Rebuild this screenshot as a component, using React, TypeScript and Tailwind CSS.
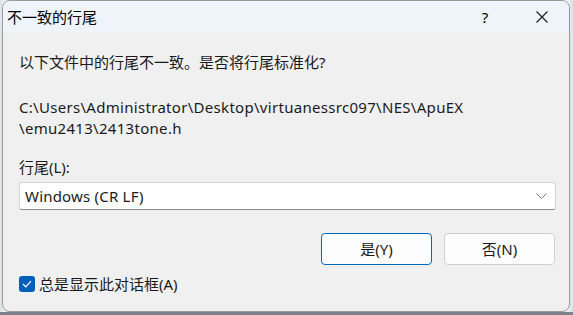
import React from "react";

const cjk = { fontFamily: '"Noto Sans", "Noto Sans CJK SC", sans-serif' };

export default function App() {
  return (
    <div className="w-[573px] h-[315px] overflow-hidden bg-[#e9edf1] flex flex-col" style={cjk}>
      <div className="flex h-[312px]">
        <div className="w-[2px] bg-[#dfe6ea]" />
        <div className="w-[568px] h-[312px] flex flex-col bg-[#f0f0f0] border border-[#9a9a9a] rounded-[8px] overflow-hidden text-[#1a1a1a]">
          {/* title bar */}
          <div className="h-[32px] bg-[#eef4fa] flex items-center shrink-0">
            <span className="pl-[4px] text-[15px] leading-none text-black">不一致的行尾</span>
            <div className="flex-1" />
            <div className="w-[46px] h-[32px] flex items-center justify-center text-[15px] text-black mr-[11px]">?</div>
            <div className="w-[46px] h-[32px] flex items-center justify-center mr-[4px]">
              <svg width="12" height="12" viewBox="0 0 12 12">
                <path d="M0.5 0.5 L11.5 11.5 M11.5 0.5 L0.5 11.5" stroke="#1a1a1a" strokeWidth="1.1" fill="none" />
              </svg>
            </div>
          </div>
          {/* body */}
          <div className="flex flex-col pl-[16px] pr-[14px]">
            <div className="mt-[19px] text-[15px] leading-[20px]">以下文件中的行尾不一致。是否将行尾标准化?</div>
            <div className="mt-[25px] text-[15px] leading-[21px] tracking-[0.3px]">
              <div>C:\Users\Administrator\Desktop\virtuanessrc097\NES\ApuEX</div>
              <div>\emu2413\2413tone.h</div>
            </div>
            <div className="mt-[18px] text-[15px] leading-[20px]">行尾(L):</div>
            <div className="mt-[5px] h-[28px] w-[537px] bg-white border border-[#d4d4d4] border-b-[#8a8a8a] rounded-[3px] flex items-center pl-[5px] pr-[8px] text-[15px]">
              <span className="flex-1 tracking-[0.2px]">Windows (CR LF)</span>
              <svg width="11" height="6" viewBox="0 0 11 6">
                <path d="M0.5 0.5 L5.5 5.5 L10.5 0.5" stroke="#7a7a7a" strokeWidth="1" fill="none" />
              </svg>
            </div>
            <div className="mt-[23px] flex justify-end gap-[12px] pr-[0px]">
              <div className="w-[111px] h-[32px] rounded-[4px] border border-[#0067c0] bg-[#fdfdfd] flex items-center justify-center text-[15px]">是(Y)</div>
              <div className="w-[111px] h-[32px] rounded-[4px] border border-[#d0d0d0] bg-[#fdfdfd] flex items-center justify-center text-[15px]">否(N)</div>
            </div>
            <div className="mt-[9px] flex items-center">
              <div className="w-[16px] h-[16px] rounded-[3px] bg-[#005fb8] flex items-center justify-center">
                <svg width="10" height="8" viewBox="0 0 10 8">
                  <path d="M1 4 L3.8 6.8 L9 1.2" stroke="white" strokeWidth="1.2" fill="none" />
                </svg>
              </div>
              <span className="ml-[4px] text-[15px] leading-[20px]">总是显示此对话框(A)</span>
            </div>
          </div>
        </div>
        <div className="flex-1 bg-[#dfe6ea]" />
      </div>
      <div className="flex-1 bg-[#7c838d]" />
    </div>
  );
}
